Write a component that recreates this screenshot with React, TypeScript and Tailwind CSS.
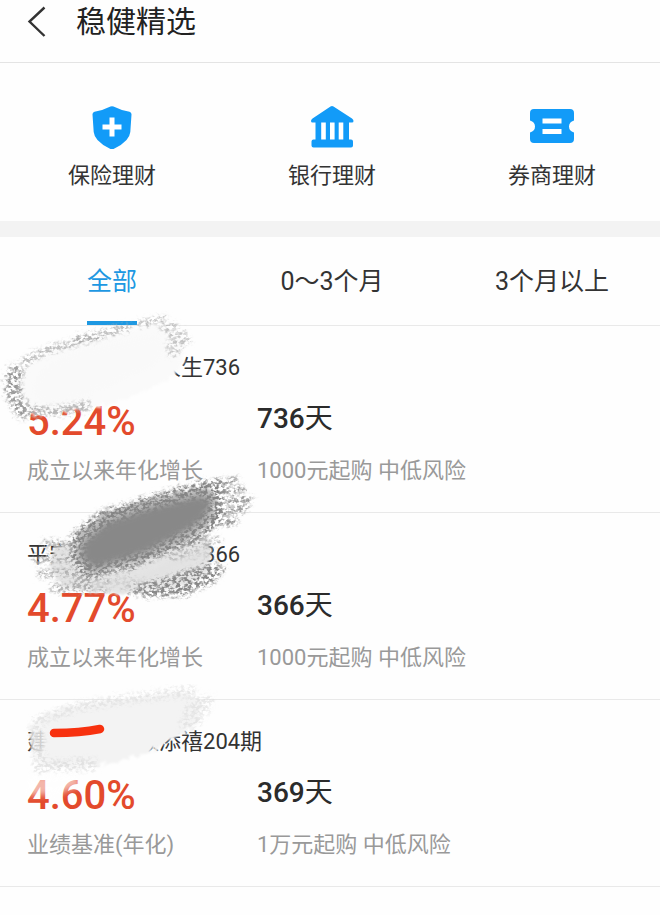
import React, { useState } from "react";

const TABS = ["全部", "0～3个月", "3个月以上"];

const PRODUCTS = [
  {
    id: 1,
    start: "",
    // width of the characters that are painted over
    hidden: "w-[132px]",
    end: "人生736",
    rate: "5.24%",
    rateLabel: "成立以来年化增长",
    days: "736",
    info: "1000元起购 中低风险",
  },
  {
    id: 2,
    start: "平安",
    hidden: "w-[132px]",
    end: "366",
    rate: "4.77%",
    rateLabel: "成立以来年化增长",
    days: "366",
    info: "1000元起购 中低风险",
  },
  {
    id: 3,
    start: "建",
    hidden: "w-[88px]",
    end: "颐添禧204期",
    rate: "4.60%",
    rateLabel: "业绩基准(年化)",
    days: "369",
    info: "1万元起购 中低风险",
  },
];

const ShieldIcon = () => (
  <svg className="h-11 w-11" viewBox="0 0 44 44" fill="none">
    <path
      d="M20.500 1.600Q22 .8 23.500 1.600Q31 5.500 39.500 6.700Q41.600 7.200 41.500 9.500L40.300 27Q39.800 31.500 36.500 35Q31.500 40.500 24 43.700Q22 44.500 20 43.700Q12.500 40.500 7.500 35Q4.200 31.500 3.700 27L2.500 9.500Q2.400 7.200 4.500 6.700Q13 5.500 20.500 1.600Z"
      fill="#129bf8"
    />
    <path d="M22 12.500V31.500M12.500 22H31.500" stroke="#fff" strokeWidth="5" />
  </svg>
);

const BankIcon = () => (
  <svg className="h-11 w-11" viewBox="0 0 44 44" fill="none">
    <path
      d="M20.500 1.600Q22 .6 23.500 1.600L42 13.500Q43.500 14.600 43.500 16Q43.500 17.500 42 17.500H39V34.500H41Q43 34.500 43 36.500V40.500Q43 42.500 41 42.500H3.500Q1.500 42.500 1.500 40.500V36.500Q1.500 34.500 3.500 34.500H5.500V17.500H2.500Q1 17.500 1 16Q1 14.600 2.500 13.500Z"
      fill="#129bf8"
    />
    <path d="M13.500 17.500V34.500M22.300 17.500V34.500M31 17.500V34.500" stroke="#fff" strokeWidth="4.600" />
  </svg>
);

const TicketIcon = () => (
  <svg className="h-11 w-11" viewBox="0 0 44 44" fill="none">
    <path
      d="M4 4H40Q44 4 44 8V15.500Q39 17 39 21.500Q39 26 44 27.500V34Q44 38 40 38H4Q0 38 0 34V27.500Q5 26 5 21.500Q5 17 0 15.500V8Q0 4 4 4Z"
      fill="#129bf8"
    />
    <path d="M12.500 16H31.500M12.500 26.500H31.500" stroke="#fff" strokeWidth="4.800" />
  </svg>
);

const CATEGORIES = [
  { name: "保险理财", icon: <ShieldIcon /> },
  { name: "银行理财", icon: <BankIcon /> },
  { name: "券商理财", icon: <TicketIcon /> },
];

// shared filters of the brush strokes
const BrushFilters = () => (
  <svg className="absolute h-0 w-0" aria-hidden="true">
    <defs>
      <filter id="rough" x="-20%" y="-30%" width="140%" height="160%">
        <feTurbulence type="fractalNoise" baseFrequency="0.2" numOctaves="3" seed="4" result="n" />
        <feDisplacementMap in="SourceGraphic" in2="n" scale="12" xChannelSelector="R" yChannelSelector="G" />
        <feGaussianBlur stdDeviation="1.2" />
      </filter>
      <filter id="grain" x="-20%" y="-30%" width="140%" height="160%">
        <feTurbulence type="fractalNoise" baseFrequency="0.26 0.34" numOctaves="2" seed="9" result="n" />
        <feColorMatrix in="n" values="0 0 0 0 0  0 0 0 0 0  0 0 0 0 0  5 0 0 0 -2" result="holes" />
        <feGaussianBlur in="SourceGraphic" stdDeviation="2" result="b" />
        <feDisplacementMap in="b" in2="n" scale="10" xChannelSelector="G" yChannelSelector="B" result="d" />
        <feComposite in="d" in2="holes" operator="in" />
        <feGaussianBlur stdDeviation="0.7" />
      </filter>
      <filter id="soft" x="-20%" y="-30%" width="140%" height="160%">
        <feGaussianBlur stdDeviation="3" />
      </filter>
    </defs>
  </svg>
);

const Brush = ({ id }: { id: number }) => {
  if (id === 1) {
    return (
      <svg
        className="pointer-events-none absolute -top-4 left-0 h-[130px] w-[280px]"
        viewBox="0 310 280 130"
        fill="none"
        aria-hidden="true"
      >
        <path
          d="M18 378Q34 354 70 342L160 324L180 334Q186 352 178 374Q140 396 94 408L34 415L16 406Z"
          fill="#fafafa"
          filter="url(#rough)"
        />
        <g filter="url(#grain)">
          <path d="M18 366Q8 388 18 404L28 416" stroke="#888" strokeWidth="15" opacity="0.8" />
          <path d="M8 386L20 388M6 378L22 376M14 410L26 412" stroke="#888" strokeWidth="4" />
          <path d="M24 412L60 410L90 405" stroke="#a8a8a8" strokeWidth="10" opacity="0.8" />
          <path d="M22 364Q40 350 70 344L130 326" stroke="#b8b8b8" strokeWidth="7" />
          <path d="M76 340L100 336" stroke="#aaa" strokeWidth="8" />
          <path d="M138 324L166 318M160 328L178 326M168 336L186 334M166 346L190 340M168 354L180 350" stroke="#b0b0b0" strokeWidth="5" />
        </g>
        <path
          d="M34 380Q46 358 86 348L156 334Q172 346 158 364Q112 388 74 400L42 404Q30 394 34 380Z"
          fill="#f9f9f9"
          filter="url(#soft)"
        />
      </svg>
    );
  }

  if (id === 2) {
    return (
      <svg
        className="pointer-events-none absolute -top-10 left-0 h-[130px] w-[280px]"
        viewBox="0 473 280 130"
        fill="none"
        aria-hidden="true"
      >
        <path
          d="M52 548L84 536L150 530L206 534Q216 552 206 572L186 588L120 594L64 588L50 570Z"
          fill="#e4e4e4"
          filter="url(#rough)"
        />
        <path
          d="M78 534L104 512L150 498L204 486L216 494L214 520L196 536L146 560L90 574L76 560Z"
          fill="#bdbdbd"
          filter="url(#rough)"
        />
        <g filter="url(#grain)">
          <path
            d="M42 544L86 544M34 560L84 558M38 574L84 572M50 588L110 588M74 580L160 584"
            stroke="#aaa"
            strokeWidth="7"
          />
          <path d="M72 534L98 512L150 496L204 480L222 482L222 522L200 540L130 570L84 578L70 560Z" fill="#858585" />
          <path d="M214 483L238 480M214 493L244 489M212 503L252 499M214 514L248 508M210 524L238 520" stroke="#858585" strokeWidth="6" />
          <path d="M126 592L150 582L214 562L226 568L212 584L184 596L146 597Z" fill="#888" />
          <path d="M180 548L220 540M170 558L212 552" stroke="#aaa" strokeWidth="6" />
        </g>
        <path
          d="M84 542L108 522L150 508L200 496L212 502L202 520L184 532L146 552L94 568L82 558Z"
          fill="#888"
          filter="url(#soft)"
        />
        <path
          d="M92 586Q140 582 172 566L206 552"
          stroke="#e2e2e2"
          strokeWidth="9"
          opacity="0.7"
          filter="url(#rough)"
        />
      </svg>
    );
  }

  return (
    <svg
      className="pointer-events-none absolute -top-4 left-0 h-[130px] w-[280px]"
      viewBox="0 684 280 130"
      fill="none"
      aria-hidden="true"
    >
      <path d="M28 778L70 772L84 784L60 794L28 796Z" fill="#fff" opacity="0.6" filter="url(#soft)" />
      <path
        d="M42 718Q60 706 90 703L186 692L202 702L196 724Q182 736 166 742L152 752L98 766L40 766L44 740Z"
        fill="#f3f3f3"
        filter="url(#rough)"
      />
      <path d="M28 724L46 716L48 758L34 762Z" fill="#f4f4f4" opacity="0.8" filter="url(#rough)" />
      <g filter="url(#grain)" opacity="0.6">
        <path
          d="M34 722L80 706L120 700L196 690M188 702L214 700M184 712L210 710M180 724L202 720"
          stroke="#dadada"
          strokeWidth="9"
        />
        <path d="M36 726L40 766L96 764" stroke="#d6d6d6" strokeWidth="12" />
      </g>
      <path d="M54 733Q80 733 100 729" stroke="#f7310f" strokeWidth="8.500" strokeLinecap="round" />
    </svg>
  );
};

const App = () => {
  const [active, setActive] = useState(0);

  return (
    <div className="min-h-screen bg-[#fefefe] font-[Roboto,'Noto_Sans_CJK_SC',sans-serif] text-[#333]">
      <BrushFilters />
      <header className="flex items-center border-b border-[#e4e4e4] pb-[18px] pl-6">
        <button type="button" aria-label="返回" className="flex h-11 w-[52px] items-center">
          <svg className="h-8 w-6" viewBox="0 0 24 32" fill="none">
            <path d="M20.500 1.500L5.500 15.500L20.500 30" stroke="#333" strokeWidth="2.400" />
          </svg>
        </button>
        <h1 className="text-[30px] leading-[44px] text-[#222]">稳健精选</h1>
      </header>

      <nav className="grid grid-cols-3 gap-1 pt-[42px] pb-[29px] pl-1">
        {CATEGORIES.map((item) => (
          <a key={item.name} href="#" className="flex flex-col items-center gap-[11px]">
            {item.icon}
            <span className="text-[22px] leading-8">{item.name}</span>
          </a>
        ))}
      </nav>

      <div className="h-4 bg-[#f3f3f3]" />

      <div className="grid grid-cols-3 gap-1 border-b border-[#e9e9e9] pl-1">
        {TABS.map((tab, index) => (
          <button
            key={tab}
            type="button"
            onClick={() => setActive(index)}
            className="flex justify-center"
          >
            <span
              className={
                index === active
                  ? "border-b-4 border-[#1d98e2] pt-[27px] pb-[21px] text-[25px] leading-9 text-[#1d98e2]"
                  : "border-b-4 border-transparent pt-[27px] pb-[21px] text-[25px] leading-9"
              }
            >
              {tab}
            </span>
          </button>
        ))}
      </div>

      <main>
        {PRODUCTS.map((item) => (
          <section key={item.id} className="relative border-b border-[#e9e9e9] px-[27px] pt-[26px] pb-[25px]">
            <h2 className="flex text-[22px] leading-8">
              {item.start && <span>{item.start}</span>}
              <span className={item.hidden} />
              <span>{item.end}</span>
            </h2>
            <div className="mt-[14px] flex">
              <div className="w-[230px]">
                <div className="text-[40px] leading-12 font-medium text-[#e34a2c]">{item.rate}</div>
                <div className="mt-[9px] text-[22px] leading-8 text-[#999]">{item.rateLabel}</div>
              </div>
              <div>
                <div className="text-[28px] leading-[42px] text-[#2b2b2b]">
                  <span className="font-medium">{item.days}</span>天
                </div>
                <div className="mt-[15px] text-[22px] leading-8 text-[#999]">{item.info}</div>
              </div>
            </div>
            <Brush id={item.id} />
          </section>
        ))}
      </main>
    </div>
  );
};

export default App;
